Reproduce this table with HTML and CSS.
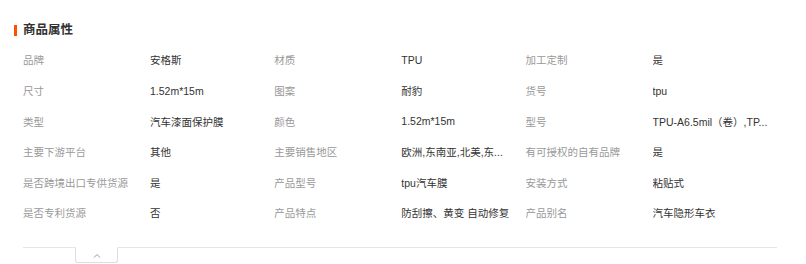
FILE: index.html
```html
<!DOCTYPE html>
<html lang="zh-CN">
<head>
<meta charset="utf-8">
<link rel="stylesheet" href="styles.css">
</head>
<body>
<div class="panel">
  <div class="title"><span class="bar"></span><span class="title-text">商品属性</span></div>
  <div class="grid">
    <div class="k">品牌</div><div class="v">安格斯</div>
    <div class="k">材质</div><div class="v">TPU</div>
    <div class="k">加工定制</div><div class="v">是</div>

    <div class="k">尺寸</div><div class="v">1.52m*15m</div>
    <div class="k">图案</div><div class="v">耐豹</div>
    <div class="k">货号</div><div class="v">tpu</div>

    <div class="k">类型</div><div class="v">汽车漆面保护膜</div>
    <div class="k">颜色</div><div class="v">1.52m*15m</div>
    <div class="k">型号</div><div class="v">TPU-A6.5mil（卷）,TP...</div>

    <div class="k">主要下游平台</div><div class="v">其他</div>
    <div class="k">主要销售地区</div><div class="v">欧洲,东南亚,北美,东...</div>
    <div class="k">有可授权的自有品牌</div><div class="v">是</div>

    <div class="k">是否跨境出口专供货源</div><div class="v">是</div>
    <div class="k">产品型号</div><div class="v">tpu汽车膜</div>
    <div class="k">安装方式</div><div class="v">粘贴式</div>

    <div class="k">是否专利货源</div><div class="v">否</div>
    <div class="k">产品特点</div><div class="v">防刮擦、黄变 自动修复</div>
    <div class="k">产品别名</div><div class="v">汽车隐形车衣</div>
  </div>
  <div class="footer">
    <div class="tab"><svg width="8" height="5" viewBox="0 0 8 5"><path d="M1 4.5 L4 1.5 L7 4.5" fill="none" stroke="#999" stroke-width="1"/></svg></div>
  </div>
</div>
</body>
</html>
```
FILE: styles.css
```css
html, body {
  margin: 0;
  padding: 0;
  background: #fff;
}
body {
  font-family: "Liberation Sans", "Noto Sans CJK SC", sans-serif;
  width: 806px;
  height: 264px;
  overflow: hidden;
}
.panel {
  padding: 0 29px 0 23px;
}
.title {
  display: flex;
  align-items: center;
  margin-left: -9px;
  padding-top: 21px;
  height: 18px;
}
.bar {
  width: 3px;
  height: 11px;
  background: #ff5000;
  margin-right: 6px;
}
.title-text {
  font-size: 12.5px;
  font-weight: bold;
  color: #333;
  line-height: 18px;
}
.grid {
  display: grid;
  grid-template-columns: repeat(3, 127px 124.3px);
  grid-auto-rows: 30.6px;
  margin-top: 5.7px;
  font-size: 10.5px;
}
.k, .v {
  display: flex;
  align-items: center;
  white-space: nowrap;
  overflow: hidden;
}
.k {
  color: #999;
}
.v {
  color: #333;
}
.footer {
  margin-top: 19px;
  border-top: 1px solid #e6e6e6;
  height: 16px;
  position: relative;
}
.tab {
  margin-left: 52px;
  margin-top: -1px;
  width: 41px;
  height: 14px;
  border: 1px solid #ddd;
  border-top: 1px solid #fff;
  border-radius: 0 0 3px 3px;
  background: #fff;
  display: flex;
  align-items: center;
  justify-content: center;
}
```
